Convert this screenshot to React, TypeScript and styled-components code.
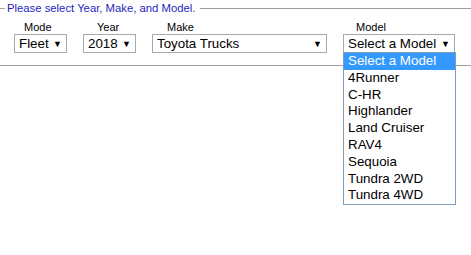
import styled, { createGlobalStyle } from "styled-components";

const GlobalStyle = createGlobalStyle`
  html, body, #root {
    height: 100%;
  }

  body {
    margin: 0;
    background: #ffffff;
    font-family: "Liberation Sans", Arial, sans-serif;
  }
`;

const models = [
  "Select a Model",
  "4Runner",
  "C-HR",
  "Highlander",
  "Land Cruiser",
  "RAV4",
  "Sequoia",
  "Tundra 2WD",
  "Tundra 4WD",
];

interface FieldProps {
  label: string;
  value: string;
  width: number;
  indent: number;
  open?: boolean;
}

function Field({ label, value, width, indent, open }: FieldProps): JSX.Element {
  return (
    <FieldBox>
      <Label $indent={indent}>{label}</Label>
      <SelectWrap>
        <FakeSelect $width={width}>
          <span>{value}</span>
          <Arrow>▼</Arrow>
        </FakeSelect>
        {open ? (
          <Dropdown>
            {models.map((m, i) => (
              <Option key={m} $active={i === 0}>
                {m}
              </Option>
            ))}
          </Dropdown>
        ) : null}
      </SelectWrap>
    </FieldBox>
  );
}

function App(): JSX.Element {
  return (
    <Page>
      <GlobalStyle />
      <Panel>
        <Legend>Please select Year, Make, and Model.</Legend>
        <Row>
          <Field label="Mode" value="Fleet" width={53} indent={10} />
          <Field label="Year" value="2018" width={53} indent={14} />
          <Field label="Make" value="Toyota Trucks" width={175} indent={15} />
          <Field label="Model" value="Select a Model" width={112} indent={13} open />
        </Row>
      </Panel>
    </Page>
  );
}

export default App;

const Page = styled.div`
  min-height: 100vh;
  background: #fff;
`;

const Panel = styled.div`
  margin-top: 2px;
  padding-bottom: 12px;
  border-bottom: 1px solid #a0a0a0;
`;

const Legend = styled.div`
  display: flex;
  align-items: center;
  gap: 2px;
  font-size: 11.3px;
  line-height: 13px;
  color: #1f1fbf;

  &::before {
    content: "";
    width: 5px;
    border-top: 1px solid #a0a0a0;
  }

  &::after {
    content: "";
    flex: 1;
    margin-left: 3px;
    border-top: 1px solid #a0a0a0;
  }
`;

const Row = styled.div`
  display: flex;
  align-items: flex-end;
  gap: 16px;
  padding: 6px 0 0 14px;
`;

const FieldBox = styled.div`
  display: flex;
  flex-direction: column;
`;

const Label = styled.div<{ $indent: number }>`
  font-size: 11px;
  line-height: 12px;
  color: #000;
  padding-left: ${({ $indent }) => $indent}px;
  margin-bottom: 1px;
`;

const SelectWrap = styled.div`
  position: relative;
`;

const FakeSelect = styled.div<{ $width: number }>`
  box-sizing: border-box;
  width: ${({ $width }) => $width}px;
  height: 19px;
  border: 1px solid #a9a9a9;
  background: #fff;
  display: flex;
  align-items: center;
  justify-content: space-between;
  padding: 0 4px 0 4px;
  font-size: 13.33px;
  color: #000;
  white-space: nowrap;
`;

const Arrow = styled.span`
  font-size: 9px;
  color: #000;
`;

const Dropdown = styled.div`
  position: absolute;
  top: 18px;
  left: 0;
  width: 113px;
  box-sizing: border-box;
  border: 1px solid #7f9db9;
  background: #fff;
  z-index: 10;
`;

const Option = styled.div<{ $active: boolean }>`
  height: 16.8px;
  line-height: 16.8px;
  padding-left: 4px;
  font-size: 13.33px;
  white-space: nowrap;
  background: ${({ $active }) => ($active ? "#3399ff" : "#fff")};
  color: ${({ $active }) => ($active ? "#fff" : "#000")};
`;
